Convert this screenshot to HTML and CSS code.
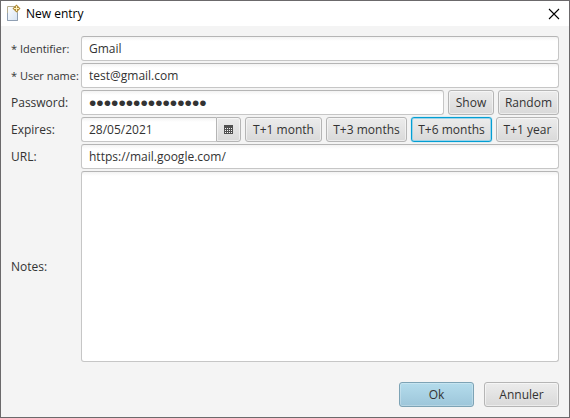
FILE: index.html
```html
<!DOCTYPE html>
<html lang="en">
<head>
<meta charset="utf-8">
<title>New entry</title>
<link rel="stylesheet" href="styles.css">
</head>
<body>
<main class="window">
  <header class="titlebar">
    <svg class="app-icon" width="16" height="17" viewBox="0 0 16 17" aria-hidden="true">
      <defs><linearGradient id="page" x1="0" y1="0" x2="1" y2="1"><stop offset="0" stop-color="#fff"/><stop offset="1" stop-color="#d5e3f3"/></linearGradient></defs>
      <path d="M0.500 1.500h10v14h-10z" fill="url(#page)" stroke="#b5ad90"/>
      <path d="M0.500 8v7.500h10V8" fill="none" stroke="#8f9fb3"/>
      <path d="M9.500 -0.500l4 4-4 4-4-4z" fill="#b08c3a"/>
      <path d="M9.500 1v5M7 3.500h5" stroke="#fff3bd" stroke-width="1"/>
    </svg>
    <h1 class="title">New entry</h1>
    <button class="close" type="button" aria-label="Close">
      <svg width="12" height="12" viewBox="0 0 12 12"><path d="M1 1l10 10M11 1L1 11" stroke="#000" stroke-width="1.100" fill="none"/></svg>
    </button>
  </header>
  <form class="form">
    <div class="fields">
      <label class="required" for="identifier">* Identifier:</label>
      <input class="field" id="identifier" type="text" value="Gmail">
      <label class="required" for="user">* User name:</label>
      <input class="field" id="user" type="text" value="test@gmail.com">
      <label for="password">Password:</label>
      <div class="row">
        <input class="field password" id="password" type="password" value="abcdefghijklmnop">
        <button class="button show" type="button">Show</button>
        <button class="button random" type="button">Random</button>
      </div>
      <label for="expires">Expires:</label>
      <div class="row">
        <div class="date">
          <input class="field" id="expires" type="text" value="28/05/2021">
          <button class="button picker" type="button" aria-label="Choose date">
            <svg width="9" height="9" viewBox="0 0 9 9" shape-rendering="crispEdges"><path d="M0 0h9v9H0z" fill="#505050"/><path d="M1 3h1v1H1zM3 3h1v1H3zM5 3h1v1H5zM7 3h1v1H7zM1 5h1v1H1zM3 5h1v1H3zM5 5h1v1H5zM7 5h1v1H7zM1 7h1v1H1zM3 7h1v1H3zM5 7h1v1H5zM7 7h1v1H7z" fill="#f4f4f4"/></svg>
          </button>
        </div>
        <button class="button month" type="button">T+1 month</button>
        <button class="button months" type="button">T+3 months</button>
        <button class="button months focused" type="button">T+6 months</button>
        <button class="button year" type="button">T+1 year</button>
      </div>
      <label for="url">URL:</label>
      <input class="field" id="url" type="text" value="https://mail.google.com/">
      <label for="notes">Notes:</label>
      <textarea class="field notes" id="notes"></textarea>
    </div>
    <footer class="actions">
      <button class="button action primary" type="submit">Ok</button>
      <button class="button action" type="button">Annuler</button>
    </footer>
  </form>
</main>
</body>
</html>
```
FILE: styles.css
```css
* { box-sizing: border-box; }

body {
  margin: 0;
  font: 12px/16px "Open Sans", "Noto Sans", sans-serif;
  color: #333;
}

input, button, textarea { font: inherit; color: inherit; margin: 0; }

.window {
  display: flex;
  flex-direction: column;
  min-height: 100vh;
  border: 1px solid #6b696b;
  background: #f4f4f4;
}

.titlebar {
  display: flex;
  align-items: center;
  height: 25px;
  padding: 0 9px 0 6px;
  background: #fff;
  color: #000;
}

.app-icon { margin-right: 3px; overflow: visible; }
.title { flex: 1; margin: 0; font-size: 12px; font-weight: 400; }

.close {
  display: flex;
  padding: 0;
  border: 0;
  background: none;
}

.form {
  flex: 1;
  display: flex;
  flex-direction: column;
  gap: 20px;
  padding: 10px;
}

.fields {
  flex: 1;
  display: grid;
  grid-template-columns: 70px 1fr;
  grid-template-rows: repeat(5, 25px) 1fr;
  gap: 2px 0;
  align-items: center;
}

.fields label { white-space: nowrap; }
.fields .required { font-size: 11px; }

.row { display: flex; gap: 4px; min-width: 0; }

.field {
  width: 100%;
  min-width: 0;
  height: 25px;
  padding: 0 7px;
  border: 1px solid #c6c6c6;
  border-top-color: #b5b5b5;
  border-radius: 3px;
  outline: none;
  background: linear-gradient(#f3f3f3, #fff 4px);
}

.password {
  flex: 1;
  font: 21px/23px "Liberation Sans", sans-serif;
}

.notes {
  display: block;
  height: 100%;
  padding: 4px 7px;
  resize: none;
}

.date { flex: 1; display: flex; min-width: 0; }
.date .field { flex: 1; border-right: 0; border-radius: 3px 0 0 3px; }

.button {
  flex: none;
  display: flex;
  align-items: center;
  justify-content: center;
  height: 25px;
  padding: 0;
  border: 1px solid #b5b5b5;
  border-radius: 3px;
  background: linear-gradient(#ececec, #d9d9d9);
  box-shadow: inset 0 0 0 1px rgba(255, 255, 255, 0.5);
  white-space: nowrap;
}

.picker { width: 25px; border-radius: 0 3px 3px 0; }
.show { width: 46px; }
.random { width: 61px; }
.month { width: 77px; }
.months { width: 81px; }
.year { width: 63px; }

.focused {
  border-color: #039ed3;
  box-shadow: inset 0 0 0 1px #9bd3e8, 0 0 1px #039ed3;
}

.actions { display: flex; justify-content: flex-end; gap: 10px; }
.action { width: 75px; }

.primary {
  border-color: #7da3b5;
  background: linear-gradient(#b4dcec, #9dc6da);
  box-shadow: inset 0 0 0 1px rgba(255, 255, 255, 0.25);
}
```
